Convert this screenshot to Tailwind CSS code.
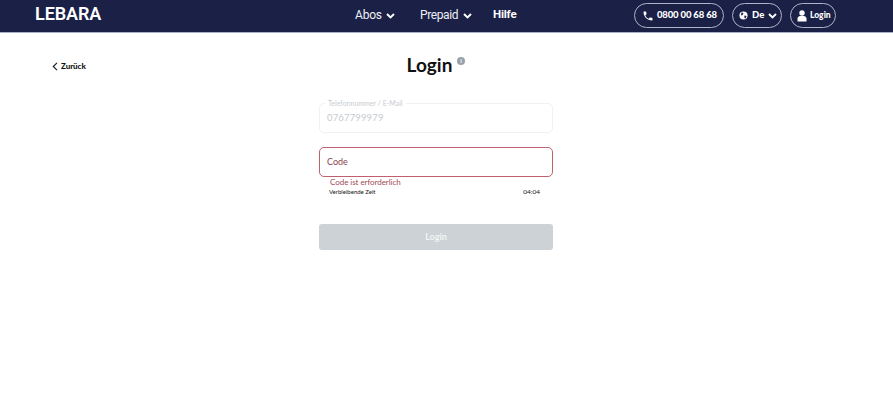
<!DOCTYPE html>
<html lang="de"><head><meta charset="utf-8">
<script src="https://cdn.jsdelivr.net/npm/@tailwindcss/browser@4"></script>
</head>
<body class="w-[893px] h-[416px] overflow-hidden bg-white font-['Lato','Noto_Sans',sans-serif]">
<header class="h-[33px] bg-[#1a2046] border-b border-[#aab0c8] flex items-center relative text-white">
  <div class="ml-[35px] w-[300px] text-[18px] leading-none font-semibold tracking-[-0.1px] font-['Roboto',sans-serif] -mt-[4px]">LEBARA</div>
  <nav class="ml-[20px] flex items-center h-full -mt-[2px] font-['Roboto',sans-serif]">
    <span class="w-[25px] text-[12px] tracking-[-0.2px] whitespace-nowrap text-[#eef0f6]">Abos</span>
    <svg class="ml-[6px] mt-[2px]" width="9" height="6" viewBox="0 0 9 6" fill="none" stroke="#fff" stroke-width="1.9"><path d="M1 1l3.500 3.500L8 1"/></svg>
    <span class="ml-[25px] w-[37px] text-[12px] tracking-[-0.4px] whitespace-nowrap text-[#eef0f6]">Prepaid</span>
    <svg class="ml-[6px] mt-[2px]" width="9" height="6" viewBox="0 0 9 6" fill="none" stroke="#fff" stroke-width="1.9"><path d="M1 1l3.500 3.500L8 1"/></svg>
    <span class="ml-[21px] text-[11.500px] font-bold tracking-[-0.2px]">Hilfe</span>
  </nav>
  <div class="absolute left-[634px] top-[3px] flex gap-[8px]">
    <div class="w-[90px] h-[25px] rounded-full border border-[#aeb3c6] flex items-center pl-[7px] gap-[3px]">
      <svg width="12" height="12" viewBox="0 0 24 24" fill="#fff"><path d="M6.600 10.800c1.400 2.800 3.800 5.100 6.600 6.600l2.200-2.200c.3-.3.7-.4 1-.2 1.100.4 2.300.6 3.600.6.600 0 1 .4 1 1V20c0 .6-.4 1-1 1C10.600 21 3 13.400 3 4c0-.6.4-1 1-1h3.500c.6 0 1 .4 1 1 0 1.300.2 2.500.6 3.600.1.300 0 .7-.2 1z"/></svg>
      <span class="text-[9.500px] font-black tracking-[-0.15px] whitespace-nowrap">0800 00 68 68</span>
    </div>
    <div class="w-[50px] h-[25px] rounded-full border border-[#aeb3c6] flex items-center pl-[6px]">
      <svg width="9" height="9" viewBox="0 0 10 10"><circle cx="5" cy="5" r="4.500" fill="#fff"/><path d="M3 1.500l2 1-1 2-2 .5zM6 5l2.500.5-1.500 3-1-1z" fill="#1a2046"/></svg>
      <span class="ml-[4px] text-[9.500px] font-black">De</span>
      <svg class="ml-[4px]" width="9" height="6" viewBox="0 0 9 6" fill="none" stroke="#fff" stroke-width="1.800"><path d="M1 1l3.500 3.500L8 1"/></svg>
    </div>
    <div class="w-[46px] h-[25px] rounded-full border border-[#aeb3c6] flex items-center pl-[6px] gap-[3px]">
      <svg width="10" height="12" viewBox="0 0 10 12" fill="#fff"><circle cx="5" cy="3" r="2.700"/><path d="M0.500 11.500V8.500C.5 7 2 6 3 6h4c1 0 2.500 1 2.500 2.500v3z"/></svg>
      <span class="text-[8.500px] font-black">Login</span>
    </div>
  </div>
</header>
<main class="relative">
  <div class="absolute left-[52px] top-[27px] flex items-center gap-[3px]">
    <svg width="6" height="9" viewBox="0 0 6 9" fill="none" stroke="#222" stroke-width="1.200"><path d="M5 .8L1.300 4.500 5 8.200"/></svg>
    <span class="text-[8px] font-black tracking-[-0.05px] text-[#111]">Zurück</span>
  </div>
  <div class="w-[234px] ml-[319px] flex flex-col">
    <div class="relative h-[70px] flex justify-center">
      <h1 class="mt-[19px] h-[26px] text-[19px] leading-[26px] font-bold text-[#111] -ml-[13px]">Login</h1>
      <span class="absolute left-[138px] top-[24px] w-[8px] h-[8px] rounded-full bg-[#98a0aa] text-white text-[6px] leading-[8px] text-center font-bold">i</span>
    </div>
    <div class="relative h-[30px] border border-[#f0f1f3] rounded-[5px] flex items-center px-[7px]">
      <span class="absolute left-[5px] -top-[5px] bg-white px-[3px] text-[7px] font-normal leading-[9px] text-[#c8ccd0] tracking-[0px]">Telefonnummer / E-Mail</span>
      <span class="text-[9.500px] text-[#c6cacd] tracking-[0.15px]">0767799979</span>
    </div>
    <div class="mt-[14px] h-[30px] border border-[#c0606e] rounded-[5px] flex items-center px-[7px]">
      <span class="text-[9px] text-[#8a3f4e] tracking-[0px]">Code</span>
    </div>
    <div class="pl-[11px] h-[10px] text-[8px] leading-[10px] text-[#a04a58] tracking-[-0.05px]">Code ist erforderlich</div>
    <div class="pl-[10px] pr-[13px] h-[9px] flex justify-between text-[6px] leading-[9px] text-[#111]"><span>Verbleibende Zeit</span><span class="text-[6.500px]">04:04</span></div>
    <div class="mt-[28px] h-[26px] rounded-[3px] bg-[#ccd2d6] flex items-center justify-center text-[9px] font-bold text-[#f2f4f5]">Login</div>
  </div>
</main>
</body></html>
